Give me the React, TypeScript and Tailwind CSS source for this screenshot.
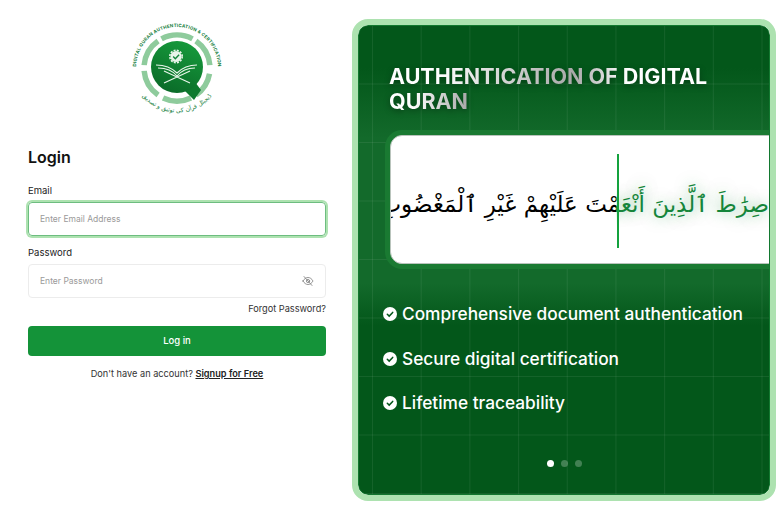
const arabic = 'صِرَٰطَ ٱلَّذِينَ أَنْعَمْتَ عَلَيْهِمْ غَيْرِ ٱلْمَغْضُوبِ';

// ring piece around the logo, angles clockwise from the top
const arc = (from: number, to: number, r = 33) => {
  const point = (deg: number) => {
    const rad = (deg * Math.PI) / 180;
    return `${(48 + r * Math.sin(rad)).toFixed(2)} ${(50 - r * Math.cos(rad)).toFixed(2)}`;
  };
  return `M ${point(from)} A ${r} ${r} 0 0 1 ${point(to)}`;
};

const ringPieces = [
  [-28, 28],
  [35, 85],
  [100, 145],
  [155, 205],
  [215, 265],
  [275, 325],
];

const Logo = () => (
  <svg width="96" height="96" viewBox="0 0 96 96" className="block">
    <defs>
      <linearGradient id="logoFill" x1="0.7" y1="0" x2="0.3" y2="1">
        <stop offset="0" stopColor="#169a3c" />
        <stop offset="1" stopColor="#0a6a28" />
      </linearGradient>
      <path id="ringText" d="M 7 50 A 41 41 0 0 1 89 50" />
      <path id="arabicText" d="M 8 70 A 45 45 0 0 0 88 70" />
    </defs>
    <g fill="none" stroke="#8ecb9c" strokeWidth="5.500">
      {ringPieces.map(([from, to]) => (
        <path key={from} d={arc(from, to)} />
      ))}
    </g>
    <path d="M 55 72 L 65 82 L 72 72 L 66 64 Z" fill="#0d7a2e" />
    <circle cx="48" cy="49" r="26" fill="url(#logoFill)" />
    <circle cx="47" cy="38.500" r="5.500" fill="#e8f5ea" />
    <circle cx="47" cy="38.500" r="6.200" fill="none" stroke="#e8f5ea" strokeWidth="1.600" strokeDasharray="2 1.250" />
    <path d="M 44.200 38.600 l 2.100 2.100 l 3.800 -3.900" fill="none" stroke="#12853a" strokeWidth="1.400" />
    <g fill="none" stroke="#e8f5ea" strokeWidth="1.200">
      <path d="M 27 47 C 35 47 43 50 48 55 C 53 50 61 47 68 47" />
      <path d="M 29 50 C 37 50 44 53 48 58 C 52 53 59 50 66 50" />
      <path d="M 35 65 L 61 53 M 61 65 L 35 53" />
    </g>
    <text fontSize="4.500" fontWeight="700" fill="#15803d" fontFamily="Inter, sans-serif" letterSpacing="0.200">
      <textPath href="#ringText" startOffset="50%" textAnchor="middle">
        DIGITAL QURAN AUTHENTICATION & CERTIFICATION
      </textPath>
    </text>
    <text fontSize="6" fill="#15803d" fontFamily="'DejaVu Sans', sans-serif">
      <textPath href="#arabicText" startOffset="50%" textAnchor="middle">
        ڈیجیٹل قرآن کی توثیق و تصدیق
      </textPath>
    </text>
  </svg>
);

const EyeSlash = () => (
  <svg width="12" height="12" viewBox="0 0 24 24" fill="none" stroke="#7c7c7c" strokeWidth="1.600" strokeLinecap="round">
    <path d="M2 12c2.600-4.600 6-7 10-7s7.400 2.400 10 7c-2.600 4.600-6 7-10 7s-7.400-2.400-10-7Z" />
    <circle cx="12" cy="12" r="3.200" />
    <path d="M4 3l16 18" />
  </svg>
);

const Check = () => (
  <svg width="14" height="14" viewBox="0 0 14 14" className="shrink-0">
    <circle cx="7" cy="7" r="7" fill="#ffffff" />
    <path d="M4.300 7.200l1.900 1.900 3.500-3.700" fill="none" stroke="#03571a" strokeWidth="1.500" strokeLinecap="round" />
  </svg>
);

const Feature = ({ label }: { label: string }) => (
  <div className="flex items-center gap-[5px] h-[24px]">
    <Check />
    <span className="text-[17.300px] font-medium text-white leading-none">{label}</span>
  </div>
);

export default function App() {
  return (
    <div className="flex w-[784px] h-[518px] bg-white overflow-hidden font-['Inter',sans-serif] text-[#111]">
      <div className="w-[352px] shrink-0 flex flex-col pl-[28px] pr-[26px]">
        <div className="flex justify-center mt-[18px] h-[96px]">
          <Logo />
        </div>
        <h1 className="mt-[30px] text-[16px] leading-[26px] font-semibold">Login</h1>
        <label className="mt-[14px] text-[9.500px] leading-[14px] text-[#222]">Email</label>
        <div className="mt-[4px] h-[34px] flex items-center px-[11px] rounded-[4px] border border-[#6dbd80] ring-2 ring-[#ade2b0]">
          <span className="text-[8.500px] text-[#9a9a9a]">Enter Email Address</span>
        </div>
        <label className="mt-[10px] text-[9.500px] leading-[14px] text-[#222]">Password</label>
        <div className="mt-[4px] h-[34px] flex items-center justify-between pl-[11px] pr-[11px] rounded-[4px] border border-[#ececec]">
          <span className="text-[8.500px] text-[#9a9a9a]">Enter Password</span>
          <EyeSlash />
        </div>
        <div className="mt-[4px] text-right text-[9.200px] leading-[14px] text-[#333]">Forgot Password?</div>
        <button className="mt-[10px] h-[30px] rounded-[4px] bg-[#149339] text-white text-[9.500px] font-medium">Log in</button>
        <p className="mt-[12px] text-center text-[9.200px] leading-[12px] text-[#333]">
          Don't have an account? <span className="font-semibold text-[#222] underline">Signup for Free</span>
        </p>
      </div>

      <div className="mt-[19px] w-[424px] h-[482px] rounded-[16px] border-[6px] border-[#ade2b0] overflow-hidden">
        <div className="relative h-full rounded-[10px] overflow-hidden border border-[#12782f] bg-[linear-gradient(180deg,#03571a_0%,#03571a_9%,#136a2b_24%,#136a2b_55%,#03571a_64%,#03571a_100%)]">
          <div className="absolute inset-0 bg-[linear-gradient(90deg,rgba(255,255,255,0.07)_1px,transparent_1px),linear-gradient(180deg,rgba(255,255,255,0.07)_1px,transparent_1px)] bg-[size:48.700px_58.500px] bg-[position:13px_-1px]" />
          <div className="relative flex flex-col h-full">
            <h2 className="mt-[38px] ml-[30px] text-[21.500px] leading-[25px] font-bold drop-shadow-[0_2px_3px_rgba(0,0,0,0.35)]">
              <span className="block w-fit text-transparent bg-clip-text bg-[linear-gradient(90deg,#ffffff_0%,#ffffff_15%,#a8a8a8_58%,#ffffff_75%,#ffffff_100%)]">
                AUTHENTICATION OF DIGITAL
              </span>
              <span className="block w-fit text-transparent bg-clip-text bg-[linear-gradient(90deg,#ffffff_0%,#ffffff_30%,#a8a8a8_100%)]">
                QURAN
              </span>
            </h2>
            <div className="relative mt-[21px] ml-[31px] w-[400px] h-[129px] shrink-0 rounded-[12px] bg-white border border-[#b9c4bc] shadow-[0_0_0_5px_#1a7a32]">
              <div className="absolute inset-0 overflow-hidden rounded-[12px]">
                <div dir="rtl" className="absolute right-[20px] top-[42px] w-[380px] whitespace-nowrap text-[23px] leading-[52px] text-black font-['DejaVu_Sans',sans-serif]">
                  {arabic}
                </div>
                <div dir="rtl" className="absolute right-[20px] top-[42px] w-[380px] whitespace-nowrap text-[23px] leading-[52px] text-[#14853a] font-['DejaVu_Sans',sans-serif] bg-white [clip-path:inset(-30px_0_-30px_227px)] [text-shadow:0_0_14px_rgba(20,147,57,0.5)]">
                  {arabic}
                </div>
                <div className="absolute left-[226px] top-[18px] h-[94px] w-[2px] bg-[#14a23e]" />
              </div>
            </div>
            <div className="mt-[38px] ml-[24px] flex flex-col gap-[20.500px]">
              <Feature label="Comprehensive document authentication" />
              <Feature label="Secure digital certification" />
              <Feature label="Lifetime traceability" />
            </div>
            <div className="mt-[45px] flex justify-center gap-[7px]">
              <span className="w-[7px] h-[7px] rounded-full bg-white" />
              <span className="w-[7px] h-[7px] rounded-full bg-white/25" />
              <span className="w-[7px] h-[7px] rounded-full bg-white/25" />
            </div>
          </div>
        </div>
      </div>
    </div>
  );
}
